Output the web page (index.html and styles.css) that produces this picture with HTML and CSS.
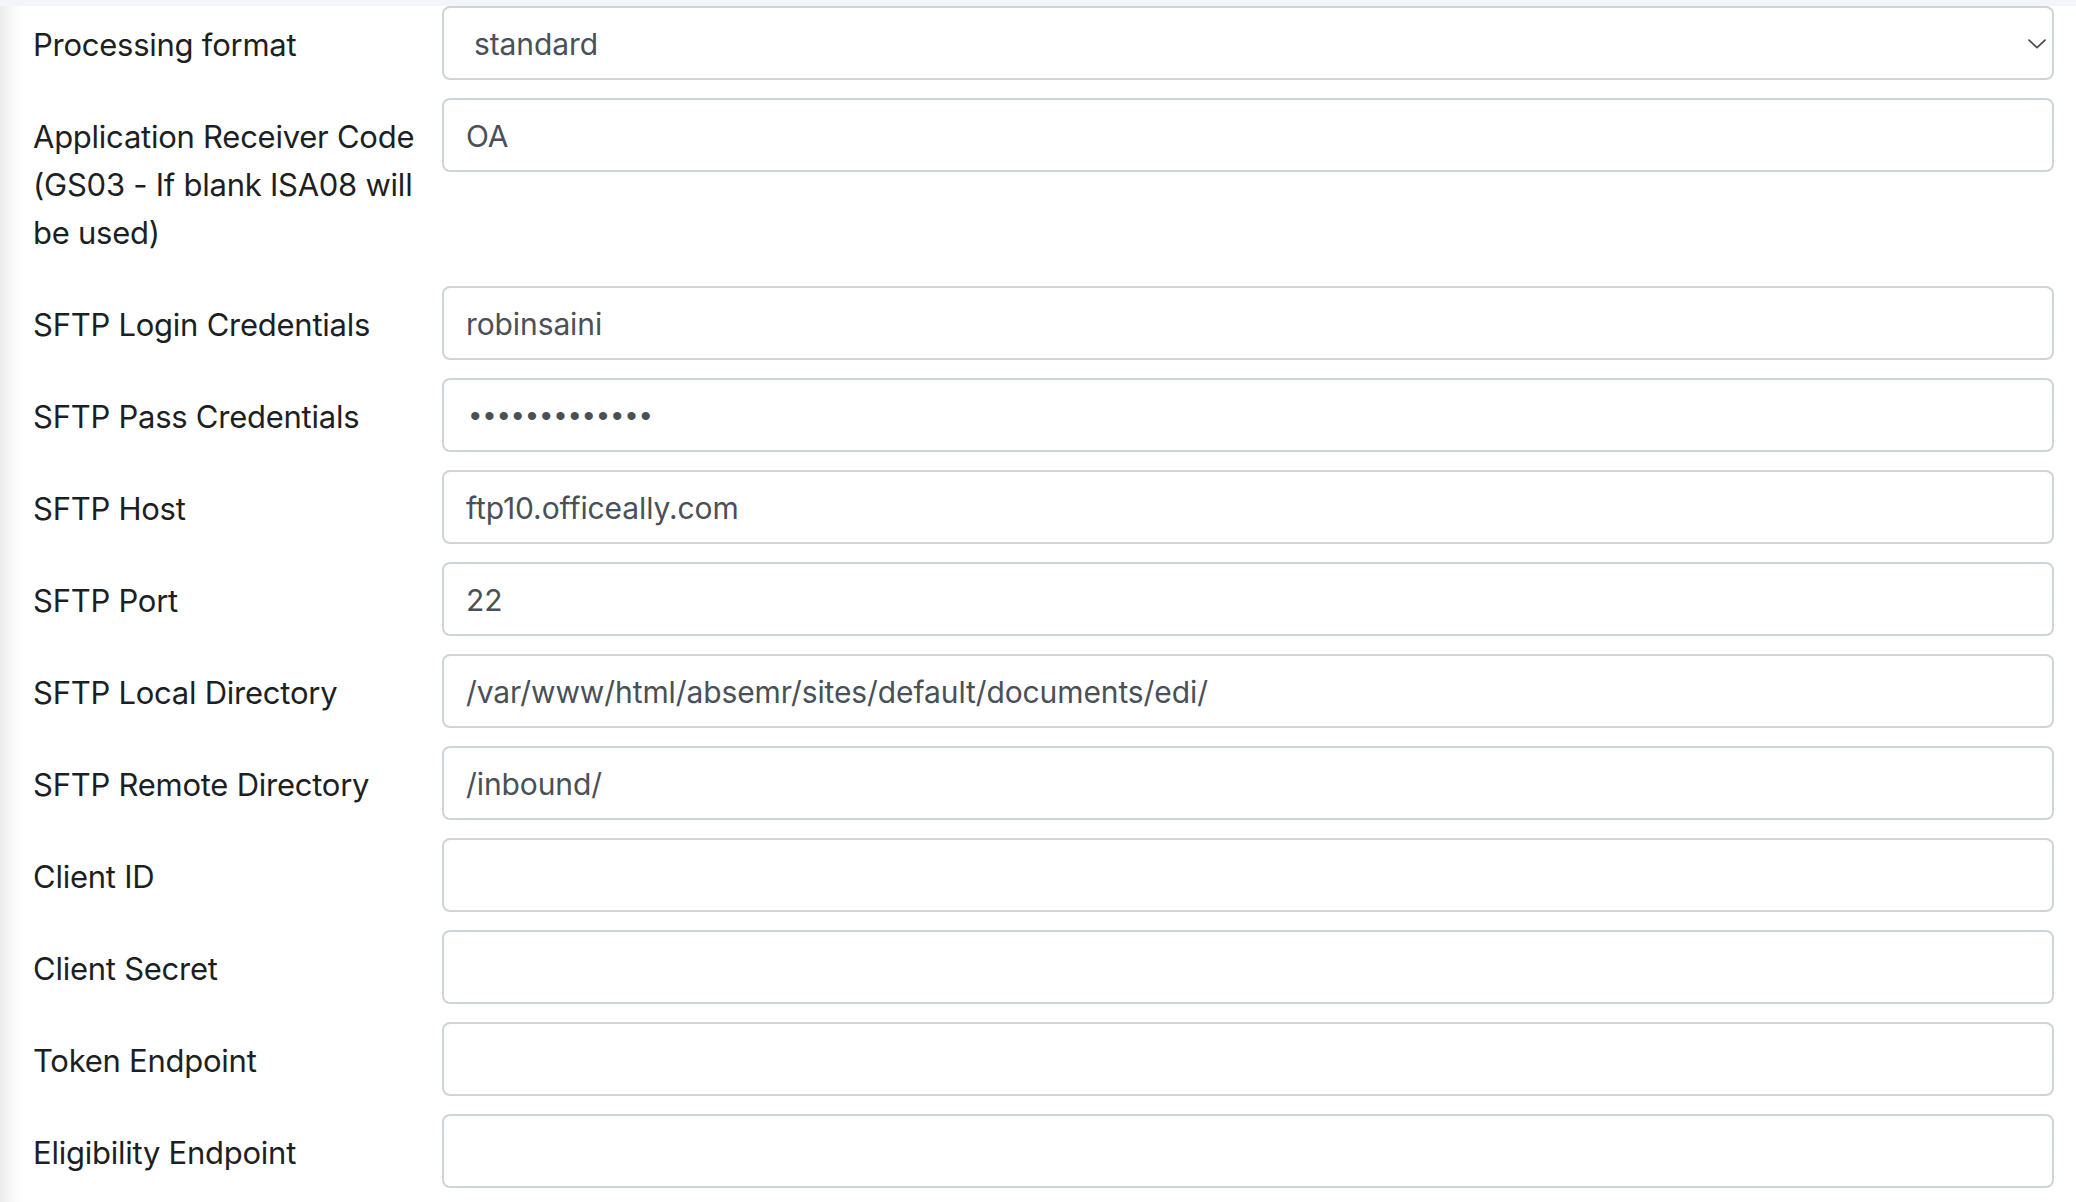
FILE: index.html
```html
<!DOCTYPE html>
<html lang="en">
<head>
<meta charset="utf-8">
<title>EDI Settings</title>
<link rel="stylesheet" href="styles.css">
</head>
<body>
<div class="page">
  <form class="form">
    <div class="row">
      <label class="label" for="fmt">Processing format</label>
      <div class="field select-wrap">
        <select id="fmt" class="control select">
          <option>standard</option>
        </select>
        <svg class="chevron" width="18" height="10" viewBox="0 0 18 10"><path d="M1 1.2 L9 8.6 L17 1.2" fill="none" stroke="#4a4f55" stroke-width="1.8" stroke-linecap="round" stroke-linejoin="round"/></svg>
      </div>
    </div>
    <div class="row">
      <label class="label" for="arc">Application Receiver Code (GS03 - If blank ISA08 will be used)</label>
      <div class="field"><input id="arc" class="control" type="text" value="OA"></div>
    </div>
    <div class="row">
      <label class="label" for="login">SFTP Login Credentials</label>
      <div class="field"><input id="login" class="control" type="text" value="robinsaini"></div>
    </div>
    <div class="row">
      <label class="label" for="pass">SFTP Pass Credentials</label>
      <div class="field"><input id="pass" class="control password" type="password" value="abcdefghijklm"></div>
    </div>
    <div class="row">
      <label class="label" for="host">SFTP Host</label>
      <div class="field"><input id="host" class="control" type="text" value="ftp10.officeally.com"></div>
    </div>
    <div class="row">
      <label class="label" for="port">SFTP Port</label>
      <div class="field"><input id="port" class="control" type="text" value="22"></div>
    </div>
    <div class="row">
      <label class="label" for="local">SFTP Local Directory</label>
      <div class="field"><input id="local" class="control" type="text" value="/var/www/html/absemr/sites/default/documents/edi/"></div>
    </div>
    <div class="row">
      <label class="label" for="remote">SFTP Remote Directory</label>
      <div class="field"><input id="remote" class="control" type="text" value="/inbound/"></div>
    </div>
    <div class="row">
      <label class="label" for="cid">Client ID</label>
      <div class="field"><input id="cid" class="control" type="text" value=""></div>
    </div>
    <div class="row">
      <label class="label" for="csec">Client Secret</label>
      <div class="field"><input id="csec" class="control" type="text" value=""></div>
    </div>
    <div class="row">
      <label class="label" for="tok">Token Endpoint</label>
      <div class="field"><input id="tok" class="control" type="text" value=""></div>
    </div>
    <div class="row">
      <label class="label" for="elig">Eligibility Endpoint</label>
      <div class="field"><input id="elig" class="control" type="text" value=""></div>
    </div>
  </form>
</div>
</body>
</html>
```
FILE: styles.css
```css
html, body {
  margin: 0;
  padding: 0;
  background: #f4f5f8;
}

body {
  font-family: Inter, "Noto Sans", "Liberation Sans", sans-serif;
  color: #212529;
  overflow: hidden;
}

.page {
  margin-top: 6px;
  min-height: 1196px;
  background: linear-gradient(90deg, #ebebeb 0, #f7f7f7 10px, #ffffff 22px);
}

.form {
  display: flex;
  flex-direction: column;
}

.row {
  display: flex;
  align-items: flex-start;
  margin-bottom: 18px;
}

.label {
  box-sizing: border-box;
  width: 442px;
  flex: 0 0 442px;
  padding: 15px 8px 11px 33px;
  font-size: 31px;
  letter-spacing: -0.25px;
  line-height: 48px;
  color: #1c1f23;
}

.field {
  flex: 1;
  margin-right: 22px;
}

.control {
  display: block;
  box-sizing: border-box;
  width: 100%;
  height: 74px;
  margin: 0;
  padding: 2px 22px 0;
  font-family: Inter, "Noto Sans", "Liberation Sans", sans-serif;
  font-size: 30px;
  letter-spacing: -0.1px;
  color: #495057;
  background: #ffffff;
  border: 2px solid #ced4da;
  border-radius: 8px;
  outline: none;
}

.password {
  font-family: "Liberation Sans", Arial, sans-serif;
  font-size: 30px;
  letter-spacing: 3.7px;
  padding-left: 26px;
}

.select-wrap {
  position: relative;
}

.select {
  -webkit-appearance: none;
  appearance: none;
  padding: 2px 22px 0 30px;
}

.chevron {
  position: absolute;
  right: 8px;
  top: 33px;
  pointer-events: none;
}
```
